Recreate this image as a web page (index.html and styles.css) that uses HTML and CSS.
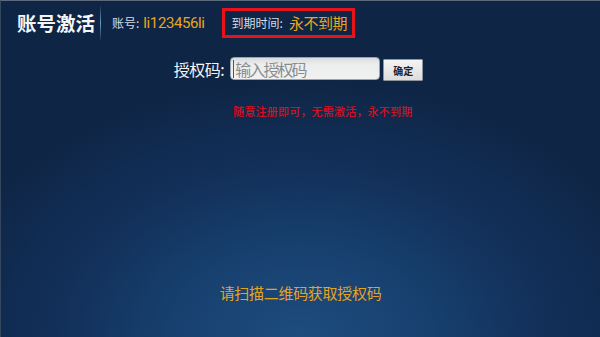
FILE: index.html
```html
<!DOCTYPE html>
<html lang="zh-CN">
<head>
<meta charset="utf-8">
<title>账号激活</title>
<link rel="stylesheet" href="styles.css">
</head>
<body>
<div class="screen">
  <header class="header">
    <h1 class="title">账号激活</h1>
    <span class="divider"></span>
    <div class="account">
      <span class="label">账号:</span>
      <span class="account-id">li123456li</span>
    </div>
    <div class="expiry">
      <span class="label">到期时间:</span>
      <span class="expiry-value">永不到期</span>
    </div>
  </header>
  <main class="main">
    <div class="form">
      <label class="form-label" for="code">授权码:</label>
      <div class="input"><span class="caret"></span><span class="placeholder">输入授权码</span></div>
      <button class="btn" type="button">确定</button>
      <p class="hint">随意注册即可，无需激活，永不到期</p>
    </div>
  </main>
  <footer class="footer">请扫描二维码获取授权码</footer>
</div>
</body>
</html>
```

FILE: styles.css
```css
* { box-sizing: border-box; }
html, body { margin: 0; padding: 0; }
body {
  width: 600px;
  height: 337px;
  overflow: hidden;
  font-family: "Noto Sans CJK SC", "Noto Sans", sans-serif;
}
.screen {
  width: 600px;
  height: 337px;
  display: flex;
  flex-direction: column;
  border-top: 1px solid #5e6a7c;
  border-left: 1px solid #34475f;
  background:
    radial-gradient(ellipse 62% 78% at 50% 100%, #1d4c7e 0%, #17406e 35%, #12305a 65%, #0f2545 100%);
  background-color: #0f2442;
}
.header {
  display: flex;
  align-items: center;
  height: 43px;
  padding-left: 16px;
}
.title {
  margin: 0;
  font-size: 19.5px;
  font-weight: 700;
  color: #f4f6f8;
  letter-spacing: 0;
  line-height: 1;
}
.divider {
  width: 1px;
  height: 34px;
  margin: 0 11px 0 5px;
  background: linear-gradient(to bottom, rgba(120,170,210,0.1), #6c9cc0 50%, rgba(120,170,210,0.1));
}
.account {
  display: flex;
  align-items: center;
  gap: 4px;
}
.label {
  font-size: 12px;
  color: #d6dbe2;
}
.account-id {
  font-family: Roboto, "Noto Sans", sans-serif;
  font-size: 15px;
  color: #eaa51b;
  letter-spacing: -0.4px;
}
.expiry {
  display: flex;
  align-items: center;
  gap: 6px;
  margin-left: 17px;
  height: 30px;
  padding: 0 5px 0 7px;
  border: 3px solid #e8121a;
}
.expiry-value {
  font-size: 15px;
  color: #eaa51b;
  letter-spacing: -0.5px;
}
.main {
  display: flex;
  justify-content: center;
  padding-top: 12px;
}
.form {
  display: grid;
  grid-template-columns: auto 150px 40px;
  column-gap: 3px;
  align-items: center;
  margin-left: -4px;
}
.form-label {
  font-size: 16px;
  color: #f2f4f6;
  margin-right: 3px;
  line-height: 24px;
  letter-spacing: -0.5px;
}
.input {
  height: 23px;
  width: 150px;
  display: flex;
  align-items: center;
  padding-left: 2px;
  border-radius: 4px;
  border: 1px solid #9aa3ad;
  background: linear-gradient(to bottom, #d9dbdd, #eceded 30%, #f1f1f1);
}
.caret {
  width: 1px;
  height: 18px;
  background: #555;
  margin-right: 1px;
}
.placeholder {
  font-size: 16px;
  color: #8a8d90;
  letter-spacing: -1.9px;
  line-height: 1;
}
.btn {
  width: 40px;
  height: 22px;
  margin-top: 3px;
  padding: 0;
  border: 1px solid #8f959c;
  border-radius: 1px;
  background: linear-gradient(to bottom, #f4f4f4, #dcdcdc);
  font-family: "Noto Sans CJK SC", sans-serif;
  font-size: 10px;
  font-weight: 700;
  color: #222;
}
.hint {
  grid-column: 2 / 4;
  margin: 23px 0 0 3px;
  font-size: 11px;
  line-height: 14px;
  font-weight: 500;
  color: #d8101e;
  letter-spacing: 0.2px;
  white-space: nowrap;
}
.footer {
  margin-top: auto;
  padding-bottom: 34px;
  text-align: center;
  font-size: 15px;
  color: #e6a41e;
  line-height: 20px;
  letter-spacing: -0.3px;
}
```
